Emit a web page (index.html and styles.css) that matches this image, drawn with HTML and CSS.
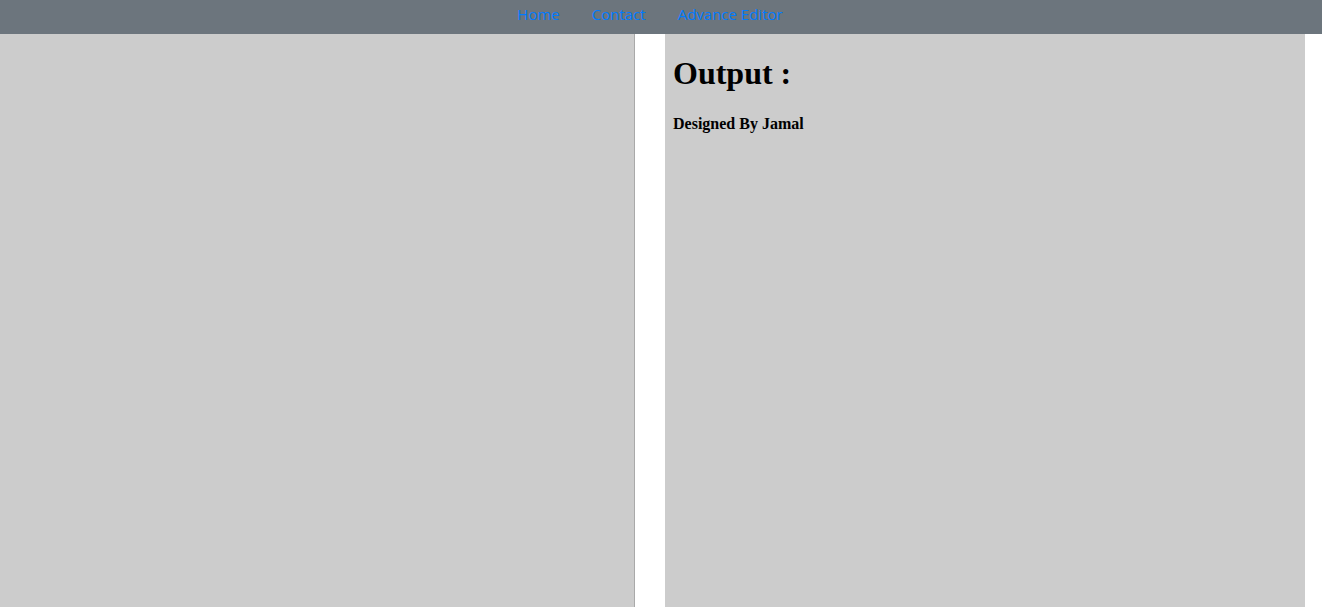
FILE: index.html
```html
<!DOCTYPE html>
<html>
<head>
<meta charset="utf-8">
<link rel="stylesheet" href="styles.css">
</head>
<body>
<nav class="topnav">
  <a class="nav-link" href="#">Home</a>
  <a class="nav-link" href="#">Contact</a>
  <a class="nav-link" href="#">Advance Editor</a>
</nav>
<main class="workspace">
  <textarea class="editor"></textarea>
  <section class="output">
    <h1 class="output-title">Output :</h1>
    <h4 class="credit">Designed By Jamal</h4>
  </section>
</main>
</body>
</html>
```
FILE: styles.css
```css
html, body {
  margin: 0;
  padding: 0;
  height: 100%;
  overflow: hidden;
  background: #ffffff;
}
.topnav {
  box-sizing: border-box;
  height: 34px;
  background: #6c757d;
  display: flex;
  justify-content: center;
  align-items: flex-start;
  padding-right: 22px;
  font-family: "Open Sans", "Noto Sans", sans-serif;
  font-size: 15px;
}
.nav-link {
  color: #007bff;
  text-decoration: none;
  padding: 0 16px;
  line-height: 28px;
}
.workspace {
  display: flex;
  height: calc(100% - 34px);
}
.editor {
  box-sizing: border-box;
  width: 635px;
  height: 100%;
  margin: 0;
  padding: 0;
  border: none;
  border-right: 1px solid #a9a9a9;
  background: #cccccc;
  resize: none;
  outline: none;
}
.output {
  box-sizing: border-box;
  width: 640px;
  margin-left: 30px;
  height: 100%;
  background: #cccccc;
  padding: 0 8px;
  display: flow-root;
  font-family: "Liberation Serif", "Times New Roman", serif;
  color: #000;
}
.output-title {
  font-size: 32px;
  margin: 21px 0;
}
.credit {
  font-size: 16px;
  margin: 23px 0;
}
```
